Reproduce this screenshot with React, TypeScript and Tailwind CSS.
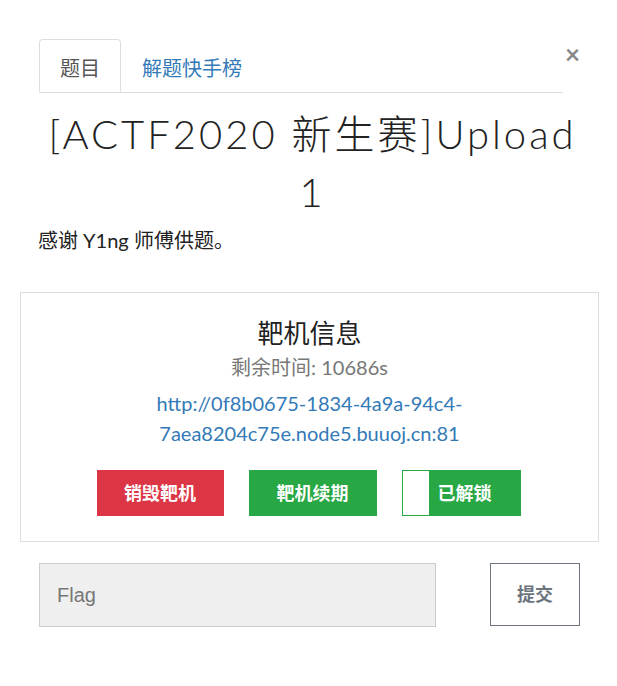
export default function App() {
  const cjk = "font-['Lato','Noto_Sans_CJK_SC',sans-serif]";
  return (
    <div className={`relative h-[686px] w-[617px] bg-white text-[#333] ${cjk}`}>
      <div className="flex items-start pl-[39px] pr-[37px] pt-[39px]">
        <ul className="flex flex-1 border-b border-[#ddd]">
          <li className="-mb-px flex h-[53px] w-[82px] items-center justify-center rounded-t border border-[#ddd] border-b-white bg-white pt-[4px] text-[20px] text-[#555]">
            题目
          </li>
          <li className="flex h-[53px] items-center px-[21px] pt-[4px] text-[20px] text-[#337ab7]">解题快手榜</li>
        </ul>
        <button className="ml-[2px] mt-[2px] text-[26px] font-bold leading-none text-[#888]">×</button>
      </div>

      <h1 className="mt-[12px] pl-[8px] text-center text-[40px] font-light leading-[58px] tracking-[0.075em] text-[#222]">
        [ACTF2020 新生赛]Upload
        <br />1
      </h1>

      <p className="mt-[5px] px-[38px] text-[20px] leading-[28px] text-[#222]">感谢 Y1ng 师傅供题。</p>

      <div className="ml-[20px] mr-[18px] mt-[38px] border border-[#ddd] pb-[25px] pt-[22px] text-center">
        <h3 className="text-[26px] leading-[36px] text-[#222]">靶机信息</h3>
        <p className="mt-[2px] text-[20px] leading-[28px] text-[#777]">剩余时间: 10686s</p>
        <a className="mt-[7px] block text-[20px] leading-[30px] text-[#337ab7]">
          http://0f8b0675-1834-4a9a-94c4-
          <br />
          7aea8204c75e.node5.buuoj.cn:81
        </a>
        <div className="mt-[22px] flex justify-center">
          <button className="ml-[-2px] h-[46px] w-[127px] bg-[#dc3545] text-[18px] font-bold text-white">销毁靶机</button>
          <button className="ml-[25px] h-[46px] w-[128px] bg-[#28a745] text-[18px] font-bold text-white">靶机续期</button>
          <button className="ml-[25px] flex h-[46px] w-[119px] items-center bg-[#28a745] p-[1px] pr-0 text-[18px] font-bold text-white">
            <span className="h-full w-[26px] bg-white" />
            <span className="flex-1 pr-[20px]">已解锁</span>
          </button>
        </div>
      </div>

      <div className="mt-[21px] flex pl-[39px] pr-[37px]">
        <input
          placeholder="Flag"
          className="h-[64px] w-[397px] border border-[#ccc] bg-[#efefef] px-[17px] font-['Liberation_Sans',sans-serif] text-[20px] text-[#555] placeholder:text-[#777]"
        />
        <button className="ml-auto h-[63px] w-[90px] border border-[#6c757d] text-[18px] font-bold text-[#6c757d]">提交</button>
      </div>
    </div>
  );
}
